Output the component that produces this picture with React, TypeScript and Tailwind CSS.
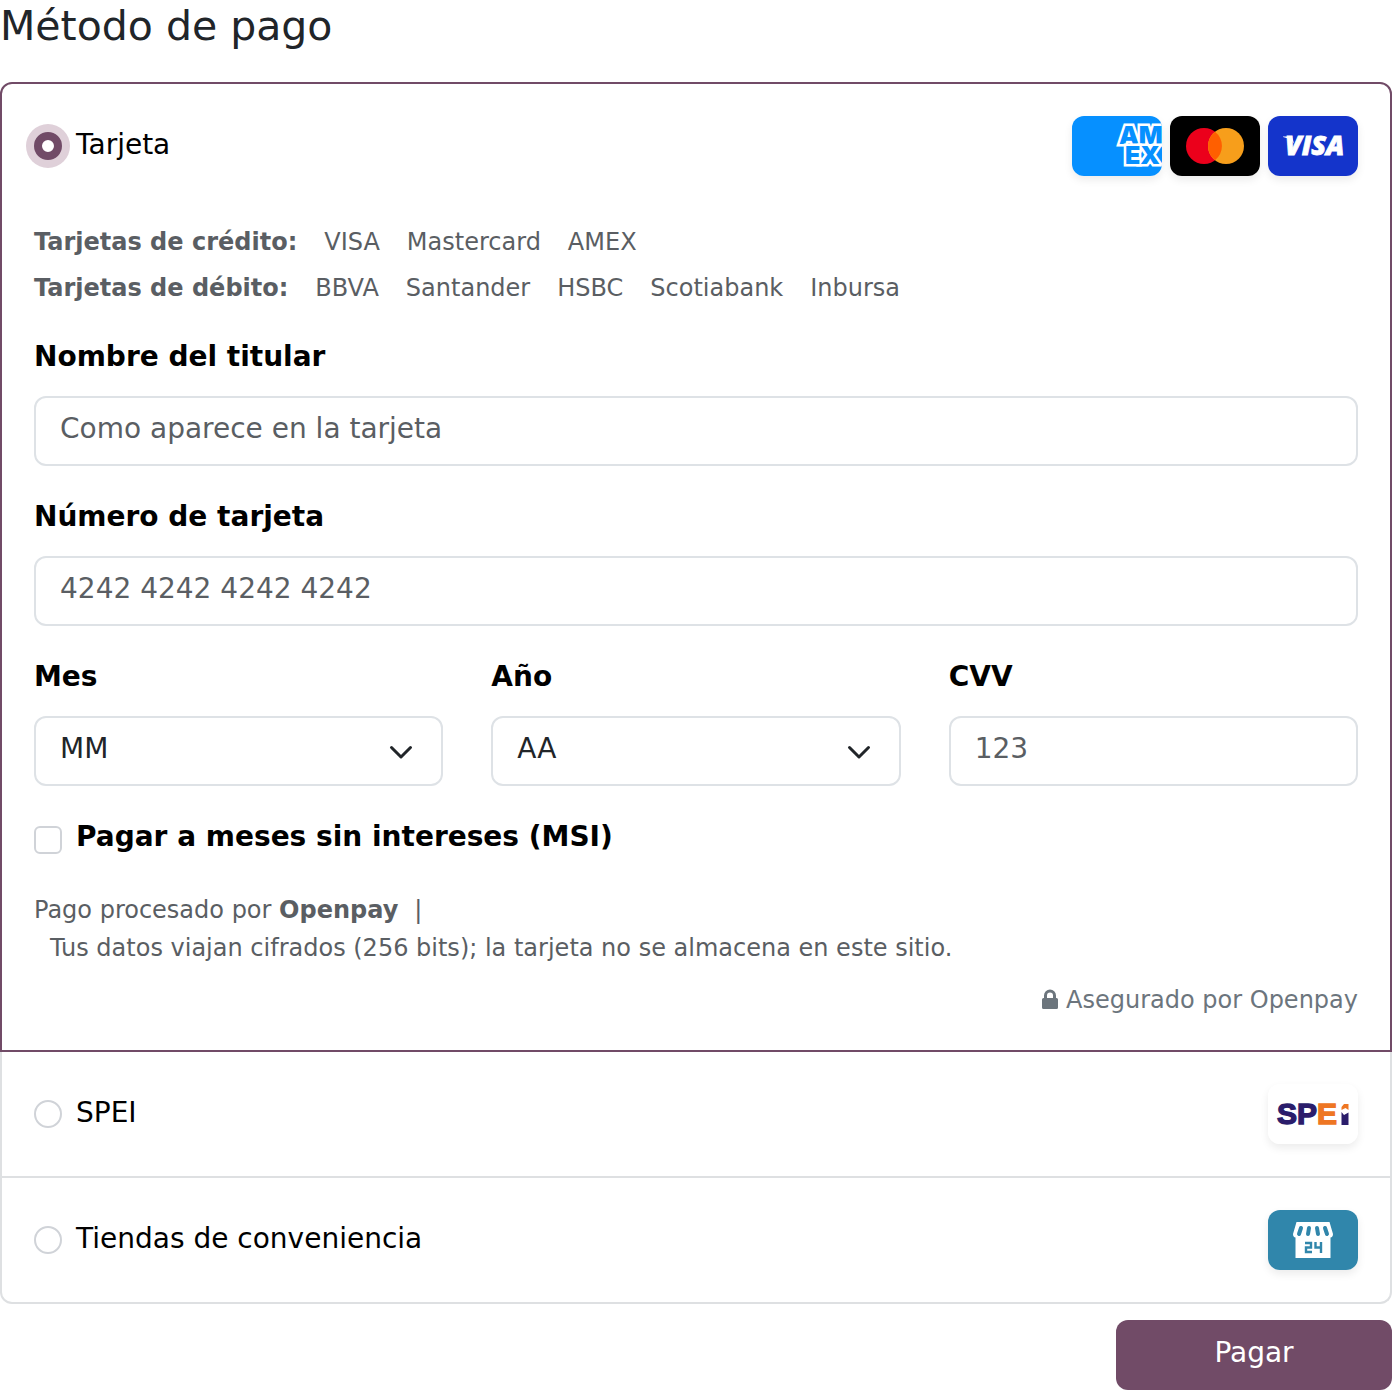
import { useState, type ReactNode } from "react";

const creditCards = ["VISA", "Mastercard", "AMEX"];
const debitCards = ["BBVA", "Santander", "HSBC", "Scotiabank", "Inbursa"];
const months = ["01", "02", "03", "04", "05", "06", "07", "08", "09", "10", "11", "12"];
const years = ["25", "26", "27", "28", "29", "30", "31", "32"];

const fieldClass =
  "block w-full h-[70px] rounded-xl border-2 border-[#dee2e6] bg-white px-6 text-[28px] leading-[42px] text-[#212529] placeholder:text-[#5a5e63] placeholder:opacity-100 outline-none focus:border-[#714B67]";

const AmexLogo = () => (
  <svg viewBox="0 0 90 60" role="img" aria-label="AMEX" className="block h-full w-full">
    <rect width="90" height="60" fill="#0690ff" />
    <text
      fill="#0690ff"
      stroke="#fff"
      strokeWidth="5"
      paintOrder="stroke"
      fontFamily="Inter, sans-serif"
      fontWeight="900"
      fontSize="25"
    >
      <tspan x="47" y="28">AM</tspan>
      <tspan x="53" y="48">EX</tspan>
    </text>
  </svg>
);

const MastercardLogo = () => (
  <svg viewBox="0 0 90 60" role="img" aria-label="Mastercard" className="block h-full w-full">
    <rect width="90" height="60" fill="#000" />
    <circle cx="34" cy="30" r="18" fill="#eb001b" />
    <circle cx="56" cy="30" r="18" fill="#f79e1b" />
    <path d="M45 15.8a18 18 0 0 1 0 28.4a18 18 0 0 1 0-28.4z" fill="#ff5f00" />
  </svg>
);

const VisaLogo = () => (
  <svg viewBox="0 0 90 60" role="img" aria-label="VISA" className="block h-full w-full">
    <rect width="90" height="60" fill="#1434cb" />
    <path d="M15 20.5h9l2 7c-2-3-6-5.500-11-6.500z" fill="#fff" />
    <text
      x="17"
      y="39"
      fill="#fff"
      stroke="#fff"
      strokeWidth="0.8"
      fontFamily="'Open Sans', sans-serif"
      fontWeight="800"
      fontStyle="italic"
      fontSize="27"
    >
      VISA
    </text>
  </svg>
);

const SpeiLogo = () => (
  <svg viewBox="0 0 90 60" role="img" aria-label="SPEI" className="block h-full w-full">
    <rect width="90" height="60" fill="#fff" />
    <g fontFamily="'Liberation Sans', sans-serif" fontWeight="700" fontSize="30" strokeWidth="1.4">
      <text x="9" y="40" fill="#2b1d6b" stroke="#2b1d6b">
        SP
        <tspan x="49" fill="#ee7623" stroke="#ee7623">
          E
        </tspan>
      </text>
    </g>
    <path d="M76 20h4.500v6l-3-2-4 2v-3z" fill="#ee7623" />
    <path d="M73.500 28l2.500 3 4.500-2.500V41h-7z" fill="#2b1d6b" />
  </svg>
);

const StoreLogo = () => (
  <svg viewBox="0 0 90 60" role="img" aria-label="Tienda 24 horas" className="block h-full w-full">
    <rect width="90" height="60" fill="#3086ab" />
    <path
      d="M28.500 12h33l3.500 12c0 2-1 3.500-2.500 3.500V48h-35V27.500c-1.500 0-2.500-1.500-2.500-3.500z"
      fill="#fff"
    />
    <g stroke="#3086ab" strokeWidth="4" strokeLinecap="round">
      <path d="M33 18l-2 6M41 18l-1 6M49 18l1 6M57 18l2 6" />
    </g>
    <g fill="none" stroke="#3086ab" strokeWidth="2.400">
      <path d="M37 33h6v4.500h-5V42h6M47.500 32v5.500h5.500M53 32v11" />
    </g>
  </svg>
);

const Badge = ({ children }: { children: ReactNode }) => (
  <div className="h-[60px] w-[90px] overflow-hidden rounded-xl shadow-[0_4px_8px_rgba(0,0,0,0.08)]">
    {children}
  </div>
);

const ChevronDown = () => (
  <svg
    viewBox="0 0 32 32"
    className="pointer-events-none absolute right-[26px] top-5 h-8 w-8"
    fill="none"
    stroke="#212529"
    strokeWidth="3"
    strokeLinecap="round"
    strokeLinejoin="round"
  >
    <path d="M6.500 11.500l9.500 9.500 9.500-9.500" />
  </svg>
);

type SelectFieldProps = {
  id: string;
  label: string;
  placeholder: string;
  options: string[];
};

const FieldLabel = ({ id, children }: { id: string; children: ReactNode }) => (
  <label htmlFor={id} className="mb-[18px] block text-[28px] leading-[42px] font-bold text-black">
    {children}
  </label>
);

const TextField = ({ id, label, placeholder }: Omit<SelectFieldProps, "options">) => (
  <div>
    <FieldLabel id={id}>{label}</FieldLabel>
    <input id={id} type="text" placeholder={placeholder} className={`${fieldClass} pb-[6px]`} />
  </div>
);

const SelectField = ({ id, label, placeholder, options }: SelectFieldProps) => (
  <div>
    <FieldLabel id={id}>{label}</FieldLabel>
    <div className="relative">
      <select id={id} defaultValue="" className={`${fieldClass} appearance-none pb-1`}>
        <option value="">{placeholder}</option>
        {options.map((option) => (
          <option key={option} value={option}>
            {option}
          </option>
        ))}
      </select>
      <ChevronDown />
    </div>
  </div>
);

type MethodHeaderProps = {
  id: string;
  label: string;
  selected: string;
  onSelect: (id: string) => void;
  children: ReactNode;
};

const MethodHeader = ({ id, label, selected, onSelect, children }: MethodHeaderProps) => (
  <div className="flex items-start justify-between">
    <div className="flex items-start gap-[14px] pt-2">
      <input
        type="radio"
        name="metodo"
        id={id}
        checked={selected === id}
        onChange={() => onSelect(id)}
        className="mt-2 h-7 w-7 appearance-none rounded-full border-2 border-[#d0d3d8] bg-white checked:border-8 checked:border-[#714B67] checked:ring-8 checked:ring-[#dfd0d9]"
      />
      <label htmlFor={id} className="text-[28px] leading-[42px] text-black">
        {label}
      </label>
    </div>
    <div className="flex gap-2">{children}</div>
  </div>
);

const AcceptedCards = ({ title, names }: { title: string; names: string[] }) => (
  <div className="flex flex-wrap gap-x-[27px]">
    <strong>{title}</strong>
    {names.map((name) => (
      <span key={name}>{name}</span>
    ))}
  </div>
);

const CardForm = () => (
  <div className="mt-[47px]">
    <div className="flex flex-col gap-2 text-[24px] leading-[38px] text-[#5a5e63]">
      <AcceptedCards title="Tarjetas de crédito:" names={creditCards} />
      <AcceptedCards title="Tarjetas de débito:" names={debitCards} />
    </div>

    <div className="mt-[29px] flex flex-col gap-[30px]">
      <TextField id="titular" label="Nombre del titular" placeholder="Como aparece en la tarjeta" />
      <TextField id="numero" label="Número de tarjeta" placeholder="4242 4242 4242 4242" />
      <div className="grid grid-cols-3 gap-12">
        <SelectField id="mes" label="Mes" placeholder="MM" options={months} />
        <SelectField id="anio" label="Año" placeholder="AA" options={years} />
        <TextField id="cvv" label="CVV" placeholder="123" />
      </div>
      <div className="flex items-start gap-[14px]">
        <input
          id="msi"
          type="checkbox"
          className="mt-[10px] h-7 w-7 appearance-none rounded-md border-2 border-[#d0d3d8] bg-white checked:border-[#714B67] checked:bg-[#714B67]"
        />
        <label htmlFor="msi" className="text-[28px] leading-[42px] font-bold text-black">
          Pagar a meses sin intereses (MSI)
        </label>
      </div>
    </div>

    <div className="mt-[33px] text-[24px] leading-[38px] text-[#5a5e63]">
      <p>
        Pago procesado por <strong>Openpay</strong>
        <span className="ml-4">|</span>
      </p>
      <p className="pl-4">
        Tus datos viajan cifrados (256 bits); la tarjeta no se almacena en este sitio.
      </p>
    </div>
    <p className="-mb-px mt-[14px] flex items-center justify-end gap-2 text-[24px] leading-[38px] text-[#6c757d]">
      <svg viewBox="0 0 16 20" className="mb-[2px] h-5 w-4" aria-hidden="true">
        <path
          d="M2 9V6.500a6 6 0 0 1 12 0V9h.5A1.500 1.500 0 0 1 16 10.500v8a1.500 1.500 0 0 1-1.500 1.500h-13A1.500 1.500 0 0 1 0 18.500v-8A1.500 1.500 0 0 1 1.500 9zM5 9h6V6.500a3 3 0 0 0-6 0z"
          fill="#6c757d"
        />
      </svg>
      Asegurado por Openpay
    </p>
  </div>
);

const App = () => {
  const [selected, setSelected] = useState("tarjeta");

  return (
    <form className="bg-white font-['DejaVu_Sans',sans-serif]">
      <h1 className="text-[41px] leading-[52px] text-[#212529]">Método de pago</h1>

      <ul className="mt-[30px]">
        <li className="rounded-t-xl border-2 border-[#714B67] p-8">
          <MethodHeader id="tarjeta" label="Tarjeta" selected={selected} onSelect={setSelected}>
            <Badge>
              <AmexLogo />
            </Badge>
            <Badge>
              <MastercardLogo />
            </Badge>
            <Badge>
              <VisaLogo />
            </Badge>
          </MethodHeader>
          {selected === "tarjeta" && <CardForm />}
        </li>
        <li className="border-x-2 border-b-2 border-[#dee0e2] p-8">
          <MethodHeader id="spei" label="SPEI" selected={selected} onSelect={setSelected}>
            <Badge>
              <SpeiLogo />
            </Badge>
          </MethodHeader>
        </li>
        <li className="rounded-b-xl border-x-2 border-b-2 border-[#dee0e2] p-8">
          <MethodHeader id="tiendas" label="Tiendas de conveniencia" selected={selected} onSelect={setSelected}>
            <Badge>
              <StoreLogo />
            </Badge>
          </MethodHeader>
        </li>
      </ul>

      <div className="mt-4 flex justify-end">
        <button
          type="button"
          className="h-[70px] w-[276px] rounded-xl bg-[#714B67] pb-1 text-[28px] leading-[42px] text-white"
        >
          Pagar
        </button>
      </div>
    </form>
  );
};

export default App;
